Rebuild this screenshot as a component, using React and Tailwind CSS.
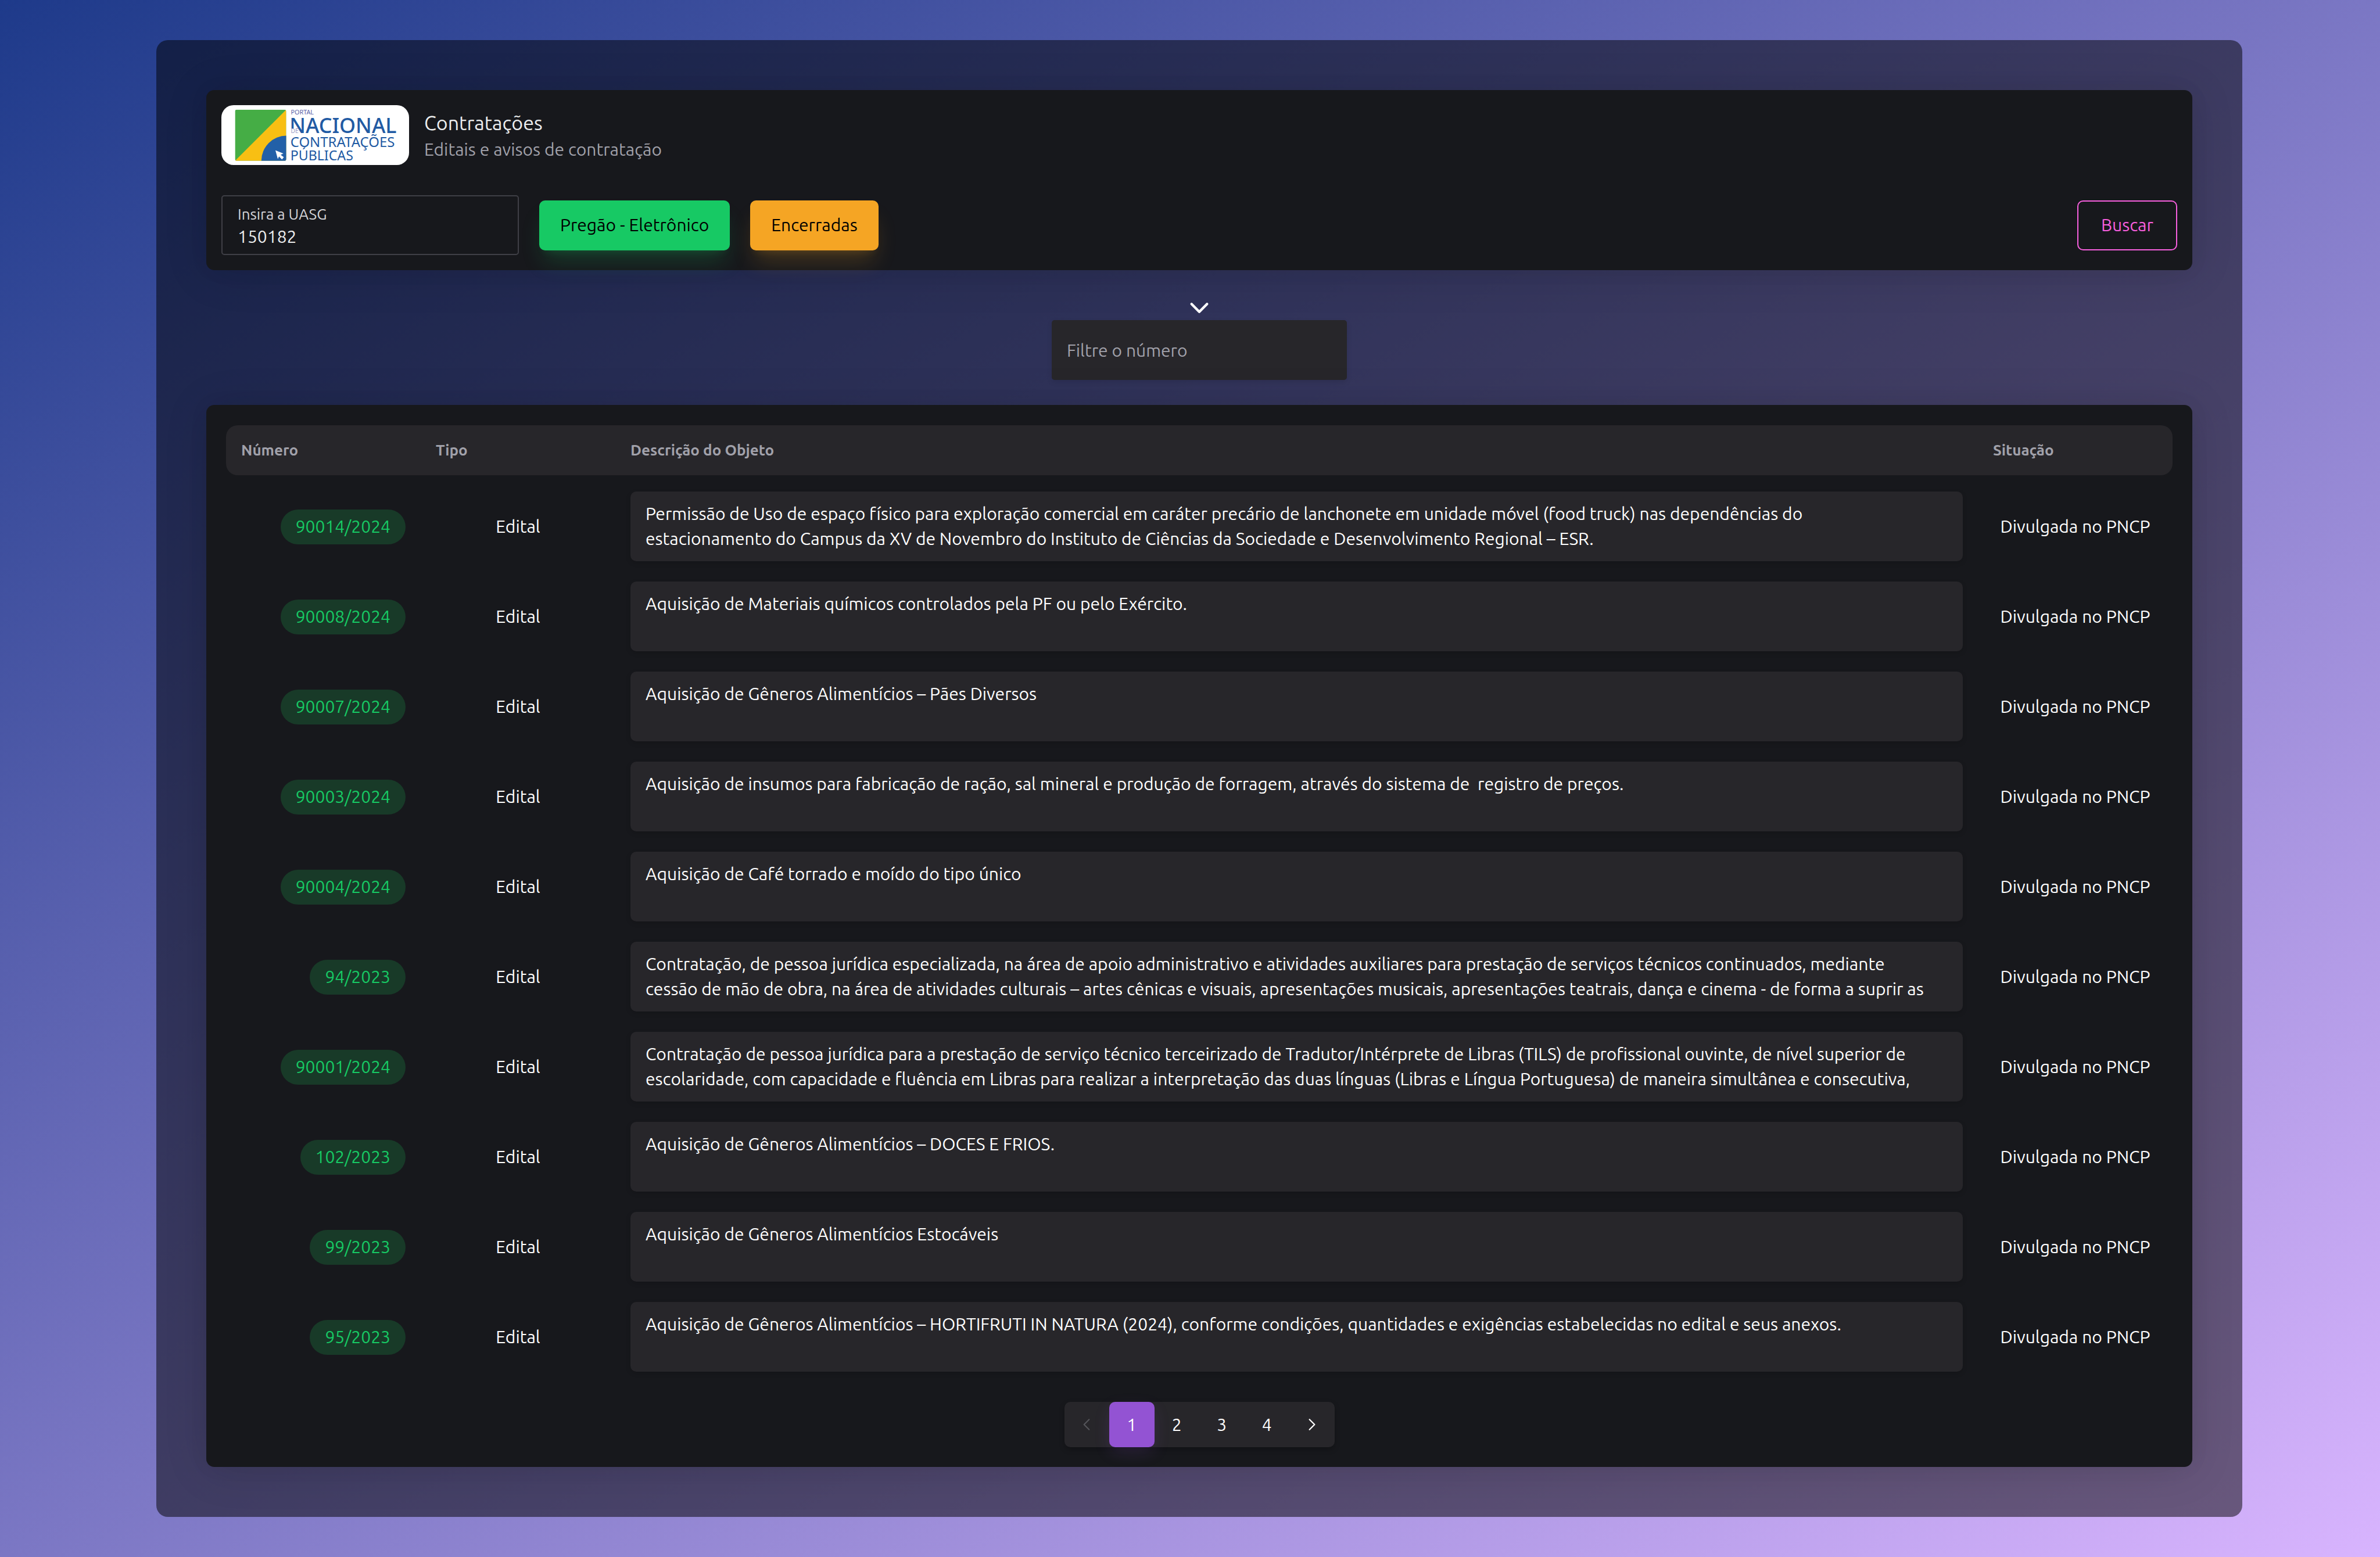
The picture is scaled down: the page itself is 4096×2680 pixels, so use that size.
const CARD_SHADOW = "shadow-[0_0_39px_rgb(0_0_0/0.04),0_5px_77px_rgb(0_0_0/0.12)]";

const ROWS = [
  {
    numero: "90014/2024",
    descricao:
      "Permissão de Uso de espaço físico para exploração comercial em caráter precário de lanchonete em unidade móvel (food truck) nas dependências do estacionamento do Campus da XV de Novembro do Instituto de Ciências da Sociedade e Desenvolvimento Regional – ESR.",
  },
  { numero: "90008/2024", descricao: "Aquisição de Materiais químicos controlados pela PF ou pelo Exército." },
  { numero: "90007/2024", descricao: "Aquisição de Gêneros Alimentícios – Pães Diversos" },
  {
    numero: "90003/2024",
    descricao:
      "Aquisição de insumos para fabricação de ração, sal mineral e produção de forragem, através do sistema de  registro de preços.",
  },
  { numero: "90004/2024", descricao: "Aquisição de Café torrado e moído do tipo único" },
  {
    numero: "94/2023",
    descricao:
      "Contratação, de pessoa jurídica especializada, na área de apoio administrativo e atividades auxiliares para prestação de serviços técnicos continuados, mediante cessão de mão de obra, na área de atividades culturais – artes cênicas e visuais, apresentações musicais, apresentações teatrais, dança e cinema - de forma a suprir as",
  },
  {
    numero: "90001/2024",
    descricao:
      "Contratação de pessoa jurídica para a prestação de serviço técnico terceirizado de Tradutor/Intérprete de Libras (TILS) de profissional ouvinte, de nível superior de escolaridade, com capacidade e fluência em Libras para realizar a interpretação das duas línguas (Libras e Língua Portuguesa) de maneira simultânea e consecutiva,",
  },
  { numero: "102/2023", descricao: "Aquisição de Gêneros Alimentícios – DOCES E FRIOS." },
  { numero: "99/2023", descricao: "Aquisição de Gêneros Alimentícios Estocáveis" },
  {
    numero: "95/2023",
    descricao:
      "Aquisição de Gêneros Alimentícios – HORTIFRUTI IN NATURA (2024), conforme condições, quantidades e exigências estabelecidas no edital e seus anexos.",
  },
];

function Logo() {
  return (
    <svg
      viewBox="0 0 1252 400"
      role="img"
      aria-label="Portal Nacional de Contratações Públicas"
      className="h-[103px] w-[323px] rounded-[21px] bg-white"
    >
      <defs>
        <clipPath id="flag">
          <rect x="90" y="30" width="342" height="342" rx="12" />
        </clipPath>
      </defs>
      <g clipPath="url(#flag)">
        <rect x="90" y="30" width="342" height="342" fill="#45ad45" />
        <path d="M432 30V372H90Z" fill="#f8bf13" />
        <circle cx="434" cy="372" r="168" fill="#2260a8" />
      </g>
      <path d="M360 302l53 21-18 9 21 16-12 15-20-20-8 17z" fill="#fff" />
      <g fontFamily="'Noto Sans', sans-serif" fill="#215aa3">
        <text x="463" y="62" fontSize="42" fill="#5a5fa6">PORTAL</text>
        <text x="454" y="188" fontSize="139" fontWeight="500">NACIONAL</text>
        <rect x="455" y="156" width="56" height="34" fill="#fff" />
        <text x="463" y="188" fontSize="40" fill="#9a9cc4">DE</text>
        <text x="460" y="278" fontSize="93">CONTRATAÇÕES</text>
        <text x="460" y="370" fontSize="90">PÚBLICAS</text>
      </g>
    </svg>
  );
}

function Chevron({ d, className, strokeWidth }) {
  return (
    <svg viewBox="0 0 24 24" fill="none" stroke="currentColor" strokeLinecap="round" strokeLinejoin="round" strokeWidth={strokeWidth} className={className} aria-hidden="true">
      <path d={d} />
    </svg>
  );
}

function Header() {
  return (
    <header className={`flex flex-col gap-[52px] rounded-[14px] bg-[#17181c] p-[26px] ${CARD_SHADOW}`}>
      <div className="flex items-center gap-[26px]">
        <Logo />
        <div>
          <h1 className="text-[34px] leading-[50px] text-[#ecedee]">Contratações</h1>
          <p className="leading-[43px] text-[#a1a1aa]">Editais e avisos de contratação</p>
        </div>
      </div>
      <form className="flex items-center gap-[35px]" onSubmit={(e) => e.preventDefault()}>
        <div className="flex h-[103px] w-[512px] flex-col rounded-[5px] border-2 border-[#3f3f46] px-[26px] pt-[14px]">
          <label htmlFor="uasg" className="text-[26px] leading-[34px] text-[#d4d4d8]">Insira a UASG</label>
          <input id="uasg" defaultValue="150182" className="w-full bg-transparent leading-[43px] text-[#ecedee] outline-none" />
        </div>
        <button type="button" className="h-[86px] rounded-[10px] bg-[#17c964] px-[36px] text-black shadow-[0_26px_39px_-8px_rgb(23_201_100/0.2),0_10px_15px_-10px_rgb(23_201_100/0.2)]">
          Pregão - Eletrônico
        </button>
        <button type="button" className="h-[86px] rounded-[10px] bg-[#f5a524] px-[36px] text-black shadow-[0_26px_39px_-8px_rgb(245_165_36/0.2),0_10px_15px_-10px_rgb(245_165_36/0.2)]">
          Encerradas
        </button>
        <button type="submit" className="ml-auto h-[86px] w-[172px] rounded-[10px] border-2 border-[#f75fde] text-[#f75fde]">
          Buscar
        </button>
      </form>
    </header>
  );
}

function ContractsTable() {
  const th = "h-[86px] bg-[#27262a] px-[26px] pb-[2px] text-left text-[26px] font-bold text-[#a1a1aa]";
  return (
    <table className="w-full table-fixed border-separate border-spacing-0">
      <colgroup>
        <col className="w-[10%]" />
        <col className="w-[10%]" />
        <col className="w-[70%]" />
        <col className="w-[10%]" />
      </colgroup>
      <thead>
        <tr>
          <th className={`${th} rounded-l-[20px]`}>Número</th>
          <th className={th}>Tipo</th>
          <th className={th}>Descrição do Objeto</th>
          <th className={`${th} rounded-r-[20px]`}>Situação</th>
        </tr>
      </thead>
      <tbody className="before:block before:h-[11px] before:content-['']">
        {ROWS.map((row) => (
          <tr key={row.numero}>
            <td className="px-[26px] text-right">
              <span className="inline-flex h-[60px] items-center rounded-full bg-[#183a28] px-[26px] text-[#17c964]">
                {row.numero}
              </span>
            </td>
            <td className="text-center">Edital</td>
            <td className="px-[26px] pt-[17px] pb-[18px]">
              <textarea
                readOnly
                rows={2}
                aria-label={`Descrição do objeto ${row.numero}`}
                defaultValue={row.descricao}
                className="block h-[120px] w-full resize-none overflow-hidden rounded-[10px] bg-[#27262a] py-[17px] pr-[58px] pl-[26px] leading-[43px] shadow-[0_3px_8px_rgb(0_0_0/0.15)] outline-none"
              />
            </td>
            <td className="text-center">Divulgada no PNCP</td>
          </tr>
        ))}
      </tbody>
    </table>
  );
}

function Pagination() {
  return (
    <nav aria-label="Paginação" className="mx-auto grid h-[78px] w-[465px] grid-cols-6 rounded-[10px] bg-[#27262a] shadow-[0_4px_10px_rgb(0_0_0/0.25)]">
      <button type="button" disabled aria-label="Página anterior" className="flex items-center justify-center text-[#56565b]">
        <Chevron d="M15.5 19l-7-7 7-7" strokeWidth={1.6} className="size-[30px]" />
      </button>
      <button type="button" aria-current="page" className="rounded-[10px] bg-[#9353d3] shadow-[0_10px_30px_-4px_rgb(147_83_211/0.2)]">1</button>
      <button type="button">2</button>
      <button type="button">3</button>
      <button type="button">4</button>
      <button type="button" aria-label="Próxima página" className="flex items-center justify-center">
        <Chevron d="M8.5 5l7 7-7 7" strokeWidth={1.8} className="size-[30px]" />
      </button>
    </nav>
  );
}

export default function App() {
  return (
    <div className="min-h-screen bg-linear-to-br/srgb from-[#1e3a8a] to-[#d8b4fe] py-[69px] pr-[237px] pl-[269px] font-['Ubuntu','Noto_Sans',sans-serif] text-[30px] leading-[43px] text-white">
      <main className="flex flex-col rounded-[20px] bg-black/50 p-[86px]">
        <Header />
        <div className="mt-[43px] flex flex-col items-center">
          <button type="button" aria-label="Mostrar filtro" className="flex h-[43px] items-center">
            <Chevron d="M4 8l8 8 8-8" strokeWidth={2.6} className="size-[40px]" />
          </button>
          <input aria-label="Filtre o número" placeholder="Filtre o número" className="h-[103px] w-[508px] rounded-[5px] bg-[#27262a] px-[26px] shadow-[0_4px_10px_rgb(0_0_0/0.1)] outline-none placeholder:text-[#a1a1aa]" />
        </div>
        <section className={`mt-[43px] flex flex-col gap-[34px] rounded-[14px] bg-[#17181c] px-[34px] pt-[35px] pb-[34px] ${CARD_SHADOW}`}>
          <ContractsTable />
          <Pagination />
        </section>
      </main>
    </div>
  );
}
